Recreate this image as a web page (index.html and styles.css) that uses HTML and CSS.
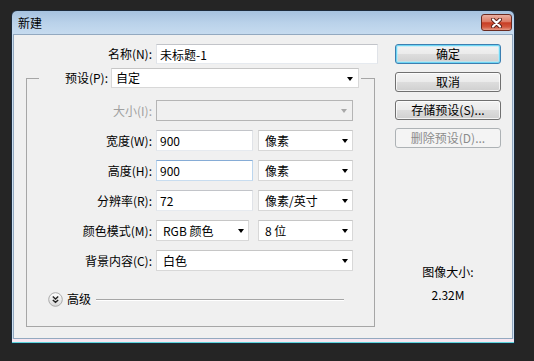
FILE: index.html
```html
<!DOCTYPE html>
<html lang="zh-CN">
<head>
  <meta charset="UTF-8">
  <meta name="viewport" content="width=device-width, initial-scale=1.0">
  <title>新建</title>
  <link rel="stylesheet" href="styles.css">
</head>
<body>
  <div class="dialog">
    <div class="titlebar">
      <span class="title">新建</span>
      <span class="close">
        <svg width="11" height="10" viewBox="0 0 11 10">
          <path d="M2 1.5 L9 8.5 M9 1.5 L2 8.5" stroke="#5a2018" stroke-width="4" stroke-linecap="round"/>
          <path d="M2 1.5 L9 8.5 M9 1.5 L2 8.5" stroke="#fff" stroke-width="2.2" stroke-linecap="round"/>
        </svg>
      </span>
    </div>

    <div class="content">
      <div class="form">
        <div class="row name-row">
          <span class="label">名称(N):</span>
          <input class="text text-name" type="text" value="未标题-1" readonly>
        </div>

        <fieldset class="group">
          <legend class="preset">
            <span class="label preset-label">预设(P):</span>
            <div class="select select-preset">自定<span class="arrow"></span></div>
          </legend>

          <div class="row">
            <span class="label label-off">大小(I):</span>
            <div class="select select-wide select-off"><span class="arrow"></span></div>
          </div>
          <div class="row">
            <span class="label">宽度(W):</span>
            <input class="text text-num" type="text" value="900" readonly>
            <div class="select select-unit">像素<span class="arrow"></span></div>
          </div>
          <div class="row">
            <span class="label">高度(H):</span>
            <input class="text text-num text-focus" type="text" value="900" readonly>
            <div class="select select-unit">像素<span class="arrow"></span></div>
          </div>
          <div class="row">
            <span class="label">分辨率(R):</span>
            <input class="text text-num" type="text" value="72" readonly>
            <div class="select select-unit">像素/英寸<span class="arrow"></span></div>
          </div>
          <div class="row">
            <span class="label">颜色模式(M):</span>
            <div class="select select-mode">RGB 颜色<span class="arrow"></span></div>
            <div class="select select-unit">8 位<span class="arrow"></span></div>
          </div>
          <div class="row">
            <span class="label">背景内容(C):</span>
            <div class="select select-wide">白色<span class="arrow"></span></div>
          </div>

          <div class="advanced">
            <svg class="chevron" width="15" height="15" viewBox="0 0 15 15">
              <defs>
                <linearGradient id="knob" x1="0" y1="0" x2="0" y2="1">
                  <stop offset="0" stop-color="#ffffff"/>
                  <stop offset="1" stop-color="#d8d8d8"/>
                </linearGradient>
              </defs>
              <circle cx="7.5" cy="7.5" r="6.8" fill="url(#knob)" stroke="#a9a9a9"/>
              <path d="M4.8 4.6 L7.5 7 L10.2 4.6 M4.8 7.9 L7.5 10.3 L10.2 7.9" fill="none" stroke="#222" stroke-width="1.4"/>
            </svg>
            <span class="advanced-text">高级</span>
            <span class="rule"></span>
          </div>
        </fieldset>
      </div>

      <div class="side">
        <button class="btn btn-default">确定</button>
        <button class="btn">取消</button>
        <button class="btn">存储预设(S)...</button>
        <button class="btn" disabled>删除预设(D)...</button>
        <div class="info">
          <div>图像大小:</div>
          <div class="info-value">2.32M</div>
        </div>
      </div>
    </div>
  </div>
</body>
</html>
```

FILE: styles.css
```css
body {
  margin: 0;
  background: #252525;
  font-family: "Noto Sans CJK SC", "Microsoft YaHei", sans-serif;
  font-size: 12px;
  color: #000;
}

/* Window frame */
.dialog {
  margin: 10px 0 0 11px;
  width: 504px;
  height: 334px;
  box-sizing: border-box;
  border: 1px solid #1c2a3a;
  border-radius: 6px 6px 0 0;
  padding: 0 1px 4px;
  display: flex;
  flex-direction: column;
  background:
    linear-gradient(#5ed6dc, #5ed6dc) left bottom / 100% 1px no-repeat,
    linear-gradient(#f6e6f1, #f6e6f1) left bottom 1px / 100% 3px no-repeat,
    linear-gradient(#a6c2df 0, #bad2ea 12px, #c6dbef 23px, #cde0f2 100%);
}
.titlebar {
  height: 23px;
  flex: none;
  display: flex;
  align-items: center;
  justify-content: space-between;
  padding: 0 1px 0 5px;
}
.title {
  line-height: 16px;
}
.close {
  width: 31px;
  height: 17px;
  box-sizing: border-box;
  border: 1px solid #6a2a20;
  border-radius: 3px;
  background: linear-gradient(#eab0a2, #dc7a64 45%, #c73d24 52%, #d2583f 80%, #e59a86);
  display: flex;
  align-items: center;
  justify-content: center;
}
.content {
  flex: 1;
  background: #f0f0f0;
  border: 1px solid #93a9c0;
  display: flex;
}

/* Form column */
.form {
  width: 370px;
  padding-top: 9px;
}
.row {
  display: flex;
  align-items: center;
  height: 21px;
  margin-bottom: 9px;
}
.label {
  flex: none;
  width: 129px;
  box-sizing: border-box;
  padding-right: 4px;
  text-align: right;
  line-height: 16px;
  white-space: nowrap;
}
.label-off {
  color: #a0a0a0;
}
.name-row {
  height: 20px;
  margin-bottom: 0;
}
.name-row .label {
  width: 142px;
}

.text {
  height: 100%;
  box-sizing: border-box;
  margin: 0;
  padding: 0 0 0 3px;
  border: 1px solid;
  border-color: #c2c4c9 #e0e3e8 #e6eaef #e0e3e8;
  background: #fff;
  font: inherit;
  color: #000;
  outline: none;
}
.text-name {
  width: 222px;
}
.text-num {
  width: 97px;
}
.text-focus {
  border-color: #86acd6 #bcd6ee #c8ddf0 #bcd6ee;
}

.select {
  height: 21px;
  box-sizing: border-box;
  border: 1px solid #d8d8d8;
  border-top-color: #c6c6c6;
  background: #fff;
  padding-left: 6px;
  display: flex;
  align-items: center;
  line-height: 16px;
  white-space: nowrap;
}
.arrow {
  flex: none;
  width: 0;
  height: 0;
  margin: 1px 4px 0 auto;
  border-left: 3.5px solid transparent;
  border-right: 3.5px solid transparent;
  border-top: 4px solid #000;
}
.select-preset {
  width: 248px;
  height: 20px;
  padding-left: 4px;
}
.select-preset .arrow {
  margin-right: 5px;
}
.select-wide {
  width: 197px;
}
.select-unit {
  width: 95px;
  margin-left: 5px;
}
.select-mode {
  width: 93px;
  margin-right: 4px;
}
.select-off {
  background: #f0f0f0;
  border-color: #b5b5b5;
}
.select-off .arrow {
  margin-right: 5px;
  border-top-color: #a8a8a8;
}

/* Group box */
.group {
  margin: 4px 0 0 12px;
  padding: 12px 0 19px;
  width: 349px;
  box-sizing: border-box;
  min-inline-size: 0;
  border: 1px solid #a6a6a6;
}
.preset {
  margin-left: 12px;
  padding: 0 2px 0 0;
  height: 20px;
  display: flex;
  align-items: center;
}
.preset-label {
  width: 72px;
  padding-right: 3px;
}

.advanced {
  display: flex;
  align-items: center;
  height: 16px;
  margin-top: 20px;
}
.chevron {
  flex: none;
  margin-left: 21px;
}
.advanced-text {
  margin-left: 4px;
  line-height: 16px;
}
.rule {
  flex: 1;
  height: 0;
  margin: 1px 30px 0 5px;
  border-top: 1px solid #a6a6a6;
  border-bottom: 1px solid #fff;
}

/* Button column */
.side {
  width: 106px;
  margin-left: 11px;
  padding-top: 9px;
  display: flex;
  flex-direction: column;
}
.btn {
  height: 20px;
  margin: 0 0 8px;
  padding: 0;
  border: 1px solid #707070;
  border-radius: 3px;
  background: linear-gradient(#f3f3f3 0%, #ebebeb 48%, #dddddd 52%, #cfcfcf 100%);
  box-shadow: inset 0 0 0 1px rgba(255, 255, 255, 0.75);
  font: inherit;
  line-height: 16px;
  color: #000;
}
.btn-default {
  border-color: #3c7fb1;
  box-shadow: inset 0 0 0 1px #6fd6f4, inset 0 0 0 2px rgba(180, 235, 250, 0.6);
}
.btn:disabled {
  border-color: #adb2b5;
  background: #f4f4f4;
  box-shadow: none;
  color: #8c8c8c;
}
.info {
  margin-top: 108px;
  text-align: center;
  line-height: 16px;
}
.info-value {
  margin-top: 7px;
}
```
